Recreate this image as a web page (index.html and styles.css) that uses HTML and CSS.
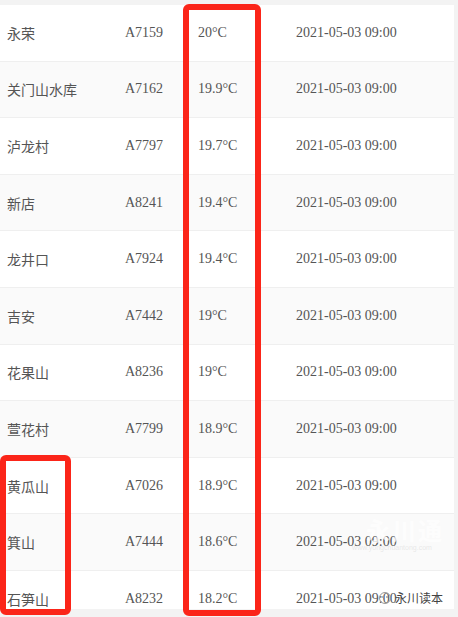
FILE: index.html
```html
<!DOCTYPE html>
<html lang="zh-CN">
<head>
  <meta charset="UTF-8">
  <meta name="viewport" content="width=device-width, initial-scale=1.0">
  <title>雨量站温度</title>
  <link rel="stylesheet" href="styles.css">
</head>
<body>

  <!-- Station temperature list -->
  <div class="sheet">
    <div class="row"><span>永荣</span><span class="num">A7159</span><span class="num">20°C</span><span class="num">2021-05-03 09:00</span></div>
    <div class="row"><span>关门山水库</span><span class="num">A7162</span><span class="num">19.9°C</span><span class="num">2021-05-03 09:00</span></div>
    <div class="row"><span>泸龙村</span><span class="num">A7797</span><span class="num">19.7°C</span><span class="num">2021-05-03 09:00</span></div>
    <div class="row"><span>新店</span><span class="num">A8241</span><span class="num">19.4°C</span><span class="num">2021-05-03 09:00</span></div>
    <div class="row"><span>龙井口</span><span class="num">A7924</span><span class="num">19.4°C</span><span class="num">2021-05-03 09:00</span></div>
    <div class="row"><span>吉安</span><span class="num">A7442</span><span class="num">19°C</span><span class="num">2021-05-03 09:00</span></div>
    <div class="row"><span>花果山</span><span class="num">A8236</span><span class="num">19°C</span><span class="num">2021-05-03 09:00</span></div>
    <div class="row"><span>萱花村</span><span class="num">A7799</span><span class="num">18.9°C</span><span class="num">2021-05-03 09:00</span></div>
    <div class="row"><span>黄瓜山</span><span class="num">A7026</span><span class="num">18.9°C</span><span class="num">2021-05-03 09:00</span></div>
    <div class="row"><span>箕山</span><span class="num">A7444</span><span class="num">18.6°C</span><span class="num">2021-05-03 09:00</span></div>
    <div class="row"><span>石笋山</span><span class="num">A8232</span><span class="num">18.2°C</span><span class="num">2021-05-03 09:00</span></div>
  </div>

  <!-- red highlight boxes drawn over the list -->
  <div class="mark mark-temp"></div>
  <div class="mark mark-name"></div>

  <!-- watermark -->
  <div class="logo-mark">
    <div class="logo-name">永川通</div>
    <div class="logo-url">www.yongchuantong.com</div>
  </div>
  <div class="wx-mark">
    <svg width="14" height="14" viewBox="0 0 14 14">
      <circle cx="7" cy="7" r="5.5" fill="none" stroke="#999" stroke-width="1"/>
      <circle cx="5" cy="6" r="0.9" fill="#999"/>
      <circle cx="9" cy="6" r="0.9" fill="#999"/>
    </svg>
    <span>永川读本</span>
  </div>

</body>
</html>
```

FILE: styles.css
```css
/* Page */
body {
  margin: 0;
  background-color: #f3f3f3;
  font-family: "Liberation Serif", "Noto Sans CJK SC", serif;
  color: #555;
  overflow: hidden;
}

.sheet {
  width: 454px;
  height: 604px;
  margin-top: 5px;
  background-color: #fff;
  overflow: hidden;
}

.row {
  display: grid;
  grid-template-columns: 118px 73px 98px 1fr;
  align-items: center;
  height: 55.6px;
  padding-left: 7px;
  border-bottom: 1px solid #efefef;
  font-size: 14px;
}

.row:nth-child(even) {
  background-color: #fafafa;
}

.row span {
  font-family: "Noto Sans CJK SC", sans-serif;
  color: #555;
}

.row .num {
  font-family: "Liberation Serif", serif;
  font-size: 14px;
}

/* Red highlight boxes */
.mark {
  position: absolute;
  border: 6px solid #fb2519;
  border-radius: 6px;
}

.mark-temp {
  left: 183px;
  top: 4px;
  width: 66px;
  height: 600px;
}

.mark-name {
  left: 0;
  top: 455px;
  width: 59px;
  height: 148px;
  border-left-width: 6px;
}

/* Watermark */
.logo-mark {
  position: absolute;
  left: 340px;
  top: 516px;
  color: rgba(255, 255, 255, 0.75);
  text-align: center;
}

.logo-name {
  font-family: "Noto Sans CJK SC", sans-serif;
  font-size: 24px;
  font-weight: bold;
  line-height: 28px;
  letter-spacing: 2px;
  padding-left: 26px;
}

.logo-url {
  font-family: "Liberation Sans", sans-serif;
  font-size: 7px;
  color: rgba(220, 220, 220, 0.6);
}

.wx-mark {
  position: absolute;
  left: 378px;
  top: 589px;
  display: flex;
  align-items: center;
  gap: 3px;
  font-family: "Noto Sans CJK SC", sans-serif;
  font-size: 12px;
  color: #444;
}
```
